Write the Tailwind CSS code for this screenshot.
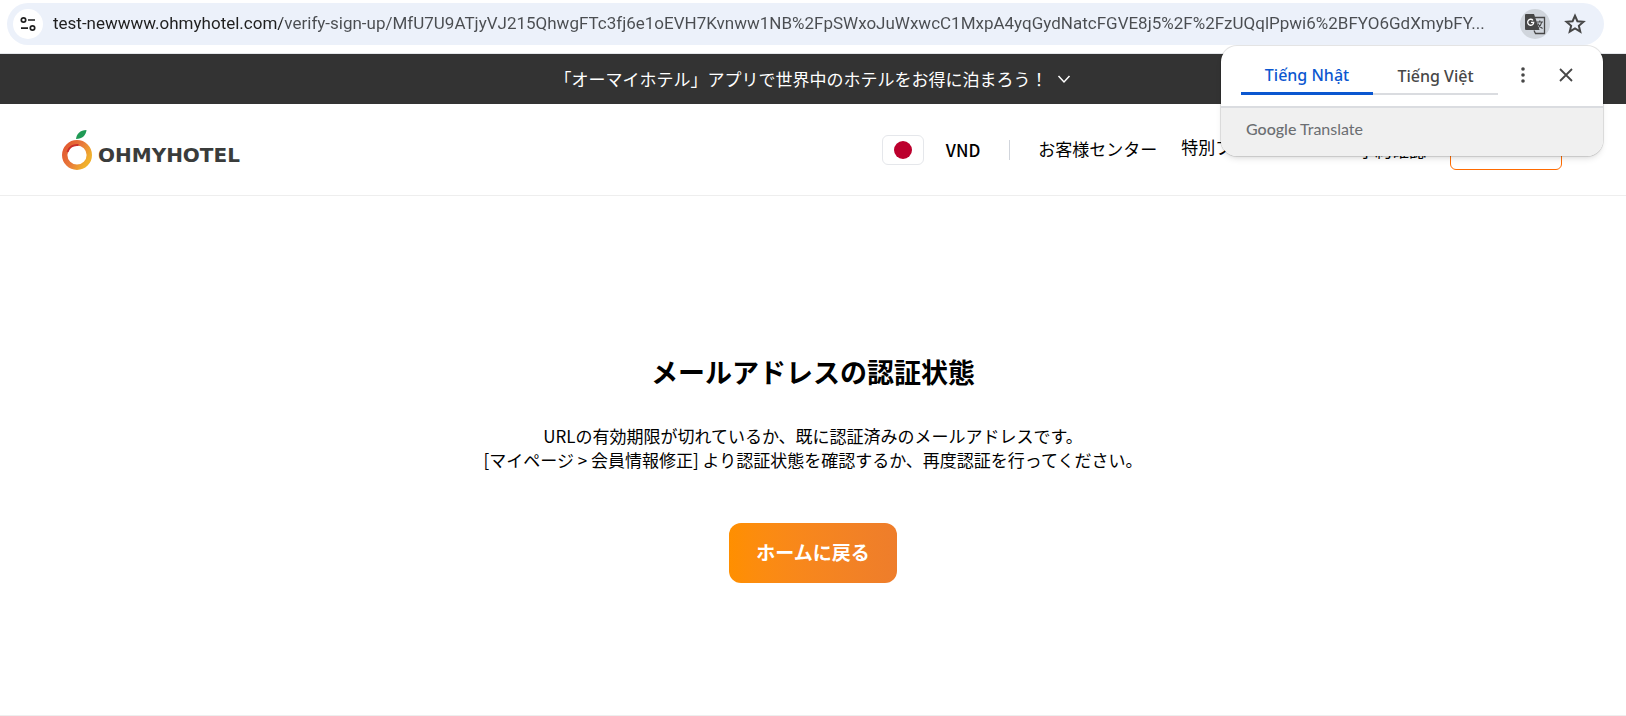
<!DOCTYPE html>
<html lang="ja">

<head>
    <meta charset="utf-8">
    <meta name="viewport" content="width=device-width, initial-scale=1">
    <title>OHMYHOTEL</title>
    <script src="https://cdn.jsdelivr.net/npm/@tailwindcss/browser@4"></script>
</head>

<body class="relative flex flex-col min-h-screen bg-white text-black text-[17px] font-['Noto_Sans_CJK_JP',sans-serif]">
    <!-- Address bar -->
    <div class="h-[54px] pt-[3px] pl-[7px] pr-[22px] border-b border-gray-200 font-['Roboto',sans-serif]">
        <div class="flex items-center h-[42px] pl-1.5 pr-3.5 rounded-full bg-[#ecf1fa]">
            <button type="button" aria-label="Site information" class="flex items-center justify-center shrink-0 size-[30px] rounded-full bg-white">
                <svg class="size-[18px]" viewBox="0 0 18 18" fill="none" stroke="#1f1f1f" stroke-width="1.7">
                    <circle cx="4.5" cy="5" r="2.2" />
                    <path d="M9 5h7M2 13.200h7" />
                    <circle cx="13.500" cy="13" r="2.200" />
                </svg>
            </button>
            <input type="text" aria-label="URL" spellcheck="false"
                value="test-newwww.ohmyhotel.com/verify-sign-up/MfU7U9ATjyVJ215QhwgFTc3fj6e1oEVH7Kvnww1NB%2FpSWxoJuWxwcC1MxpA4yqGydNatcFGVE8j5%2F%2FzUQqlPpwi6%2BFYO6GdXmybFY..."
                class="flex-1 min-w-0 ml-2.5 text-[17px] text-transparent bg-clip-text bg-[linear-gradient(90deg,#1f1f1f_229px,#4a4d51_229px)] outline-none">
            <button type="button" aria-label="Translate this page" class="flex items-center justify-center shrink-0 size-[30px] mr-2.5 rounded-full bg-[#d0d5dc]">
                <svg class="size-[22px]" viewBox="0 0 22 22" fill="none">
                    <path d="M2 1h8l5.500 16H2a1 1 0 0 1-1-1V2a1 1 0 0 1 1-1z" fill="#474747" />
                    <path d="M11 4.500h9.500v16h-9l-1.500-3" stroke="#474747" stroke-width="1.300" />
                    <path d="M9 7.300a3 3 0 1 0 .7 2H7" stroke="#fff" stroke-width="1.300" />
                    <path d="M12.500 9h6.500M15.800 7.500V9M17.800 9c-.6 3-2.500 5-4.300 6.300M13.800 10.500c1 2.500 2.500 4 4.800 5" stroke="#474747" stroke-width="1.200" />
                </svg>
            </button>
            <button type="button" aria-label="Bookmark this page" class="flex items-center justify-center shrink-0 size-[30px]">
                <svg class="size-[22px]" viewBox="0 0 20 20" fill="none" stroke="#474747" stroke-width="1.800">
                    <path d="M10 2.500l2.200 5 5.500.5-4.200 3.600 1.300 5.400-4.800-2.900L5.200 17l1.300-5.400L2.300 8l5.500-.5z" />
                </svg>
            </button>
        </div>
    </div>

    <!-- App banner -->
    <button type="button" class="flex items-center justify-center gap-2 w-full h-[50px] bg-[#333] text-[17px] text-white">
        <span>「オーマイホテル」アプリで世界中のホテルをお得に泊まろう！</span>
        <svg class="size-4" viewBox="0 0 16 16" fill="none" stroke="#fff" stroke-width="1.500">
            <path d="M2.500 5l5.500 6 5.500-6" />
        </svg>
    </button>

    <header class="flex items-center justify-between h-[92px] pl-[62px] pr-16 border-b border-[#eee]">
        <a href="#" class="flex items-end gap-1.5">
            <svg class="w-[30px] h-10" viewBox="0 0 30 40" fill="none">
                <defs>
                    <linearGradient id="ring" x1="0" y1="0" x2="1" y2="0.600">
                        <stop offset="0" stop-color="#e2552f" />
                        <stop offset="0.550" stop-color="#e8793a" />
                        <stop offset="1" stop-color="#f0b02c" />
                    </linearGradient>
                </defs>
                <circle cx="15" cy="25" r="12.300" stroke="url(#ring)" stroke-width="5.400" />
                <path d="M5.500 22c1.500-5 6-7.500 11-7" stroke="#c9302c" stroke-width="2" />
                <path d="M14 9c.5-5 4-9 10.500-9-.5 5-4 9-10.500 9z" fill="#1f9a55" />
            </svg>
            <span class="font-['DejaVu_Sans',sans-serif] text-xl leading-[30px] font-bold text-[#3a3c3b]">OHMYHOTEL</span>
        </a>
        <nav class="flex items-center">
            <button type="button" aria-label="日本語" class="flex items-center justify-center w-[42px] h-[30px] border border-gray-200 rounded-md">
                <span class="size-[18px] rounded-full bg-[#bc002d]"></span>
            </button>
            <button type="button" class="ml-[22px] font-medium">VND</button>
            <span class="w-px h-5 ml-[29px] mr-[28px] bg-gray-300"></span>
            <div class="flex items-center gap-6">
                <a href="#" class="pb-0.5">お客様センター</a>
                <a href="#" class="pb-1.5">特別プロモーション</a>
                <a href="#">予約確認</a>
                <button type="button" class="w-28 h-10 pb-2 border border-[#ff6b00] rounded-md text-base text-[#ff6b00]">ログイン</button>
            </div>
        </nav>
    </header>

    <main class="flex flex-col flex-1 items-center pt-[156px] pb-[130px]">
        <h1 class="text-[27px] leading-10 font-bold">メールアドレスの認証状態</h1>
        <p class="mt-8 leading-6 text-center">URLの有効期限が切れているか、既に認証済みのメールアドレスです。<br>[マイページ &gt; 会員情報修正] より認証状態を確認するか、再度認証を行ってください。</p>
        <button type="button" class="w-[168px] h-[60px] mt-[51px] pb-0.5 rounded-xl bg-linear-to-r from-[#ff8f00] to-[#ee7d2b] text-[19px] font-bold text-white">ホームに戻る</button>
    </main>
    <footer class="border-t border-[#eee]"></footer>

    <!-- Translate popup -->
    <div class="absolute top-[46px] right-[23px] w-[382px] rounded-2xl bg-white shadow-md ring-1 ring-black/10 overflow-hidden text-[#474747] font-['Noto_Sans',sans-serif]">
        <div class="flex h-[62px] pl-5 border-b-2 border-[#dadce0]">
            <div class="flex h-[49px] text-base font-medium">
                <button type="button" class="w-[132px] pt-3 border-b-3 border-[#0b57d0] text-[#0b57d0]">Tiếng Nhật</button>
                <button type="button" class="w-[125px] pt-3 border-b-2 border-[#dadce0]">Tiếng Việt</button>
            </div>
            <button type="button" aria-label="Options" class="flex items-center justify-center w-[50px] h-[58px]">
                <svg class="size-5" viewBox="0 0 20 20" fill="#474747">
                    <circle cx="10" cy="4" r="1.800" />
                    <circle cx="10" cy="10" r="1.800" />
                    <circle cx="10" cy="16" r="1.800" />
                </svg>
            </button>
            <button type="button" aria-label="Close" class="flex items-center justify-center w-9 h-[58px]">
                <svg class="size-4" viewBox="0 0 16 16" fill="none" stroke="#474747" stroke-width="1.800">
                    <path d="M2 2l12 12M14 2L2 14" />
                </svg>
            </button>
        </div>
        <div class="flex items-center h-12 pl-[25px] pb-1.5 bg-[#f0f0f0] text-base text-[#6b6e72] font-['Lato',sans-serif]"><span><span class="font-medium">Google</span> Translate</span></div>
    </div>
</body>

</html>
